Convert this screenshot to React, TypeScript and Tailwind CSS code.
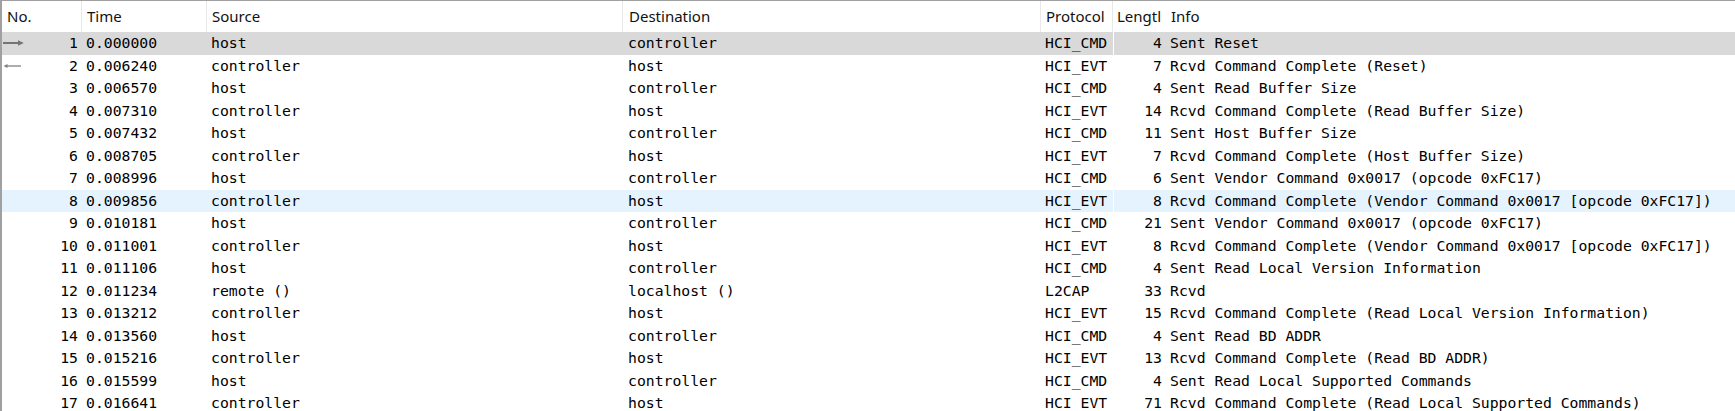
import React from 'react'

type Packet = {
  no: number
  time: string
  src: string
  dst: string
  proto: string
  len: number
  info: string
  dir?: 'out' | 'in'
  state?: 'selected' | 'hover'
}

const packets: Packet[] = [
  { no: 1, time: '0.000000', src: 'host', dst: 'controller', proto: 'HCI_CMD', len: 4, info: 'Sent Reset', dir: 'out', state: 'selected' },
  { no: 2, time: '0.006240', src: 'controller', dst: 'host', proto: 'HCI_EVT', len: 7, info: 'Rcvd Command Complete (Reset)', dir: 'in' },
  { no: 3, time: '0.006570', src: 'host', dst: 'controller', proto: 'HCI_CMD', len: 4, info: 'Sent Read Buffer Size' },
  { no: 4, time: '0.007310', src: 'controller', dst: 'host', proto: 'HCI_EVT', len: 14, info: 'Rcvd Command Complete (Read Buffer Size)' },
  { no: 5, time: '0.007432', src: 'host', dst: 'controller', proto: 'HCI_CMD', len: 11, info: 'Sent Host Buffer Size' },
  { no: 6, time: '0.008705', src: 'controller', dst: 'host', proto: 'HCI_EVT', len: 7, info: 'Rcvd Command Complete (Host Buffer Size)' },
  { no: 7, time: '0.008996', src: 'host', dst: 'controller', proto: 'HCI_CMD', len: 6, info: 'Sent Vendor Command 0x0017 (opcode 0xFC17)' },
  { no: 8, time: '0.009856', src: 'controller', dst: 'host', proto: 'HCI_EVT', len: 8, info: 'Rcvd Command Complete (Vendor Command 0x0017 [opcode 0xFC17])', state: 'hover' },
  { no: 9, time: '0.010181', src: 'host', dst: 'controller', proto: 'HCI_CMD', len: 21, info: 'Sent Vendor Command 0x0017 (opcode 0xFC17)' },
  { no: 10, time: '0.011001', src: 'controller', dst: 'host', proto: 'HCI_EVT', len: 8, info: 'Rcvd Command Complete (Vendor Command 0x0017 [opcode 0xFC17])' },
  { no: 11, time: '0.011106', src: 'host', dst: 'controller', proto: 'HCI_CMD', len: 4, info: 'Sent Read Local Version Information' },
  { no: 12, time: '0.011234', src: 'remote ()', dst: 'localhost ()', proto: 'L2CAP', len: 33, info: 'Rcvd' },
  { no: 13, time: '0.013212', src: 'controller', dst: 'host', proto: 'HCI_EVT', len: 15, info: 'Rcvd Command Complete (Read Local Version Information)' },
  { no: 14, time: '0.013560', src: 'host', dst: 'controller', proto: 'HCI_CMD', len: 4, info: 'Sent Read BD ADDR' },
  { no: 15, time: '0.015216', src: 'controller', dst: 'host', proto: 'HCI_EVT', len: 13, info: 'Rcvd Command Complete (Read BD ADDR)' },
  { no: 16, time: '0.015599', src: 'host', dst: 'controller', proto: 'HCI_CMD', len: 4, info: 'Sent Read Local Supported Commands' },
  { no: 17, time: '0.016641', src: 'controller', dst: 'host', proto: 'HCI_EVT', len: 71, info: 'Rcvd Command Complete (Read Local Supported Commands)' },
]

function DirArrow({ dir }: { dir: 'out' | 'in' }) {
  if (dir === 'out') {
    return (
      <svg width="21" height="8" viewBox="0 0 21 8" className="shrink-0">
        <line x1="0" y1="4" x2="16" y2="4" stroke="#747474" strokeWidth="2" />
        <path d="M15 1.3 L20.8 4 L15 6.7 Z" fill="#747474" />
      </svg>
    )
  }
  return (
    <svg width="19" height="8" viewBox="0 0 19 8" className="shrink-0">
      <line x1="3" y1="4" x2="18" y2="4" stroke="#808080" strokeWidth="1.3" />
      <path d="M0.5 4 L4.5 2 L4.5 6 Z" fill="#808080" />
    </svg>
  )
}

const mono = { fontFamily: '"DejaVu Sans Mono", "Liberation Mono", monospace' }

export default function App() {
  return (
    <div
      className="w-[1735px] h-[411px] overflow-hidden bg-white border-t border-l-2 border-[#a0a0a0] text-black"
      style={{ fontFamily: '"Noto Sans", "Open Sans", sans-serif' }}
    >
      {/* column headers */}
      <div className="flex h-[31px] items-center text-[15px] text-[#111]">
        <div className="w-[80px] h-full flex items-center pl-[5px] border-r border-[#e8e8e8]">No.</div>
        <div className="w-[125px] h-full flex items-center pl-[5px] border-r border-[#e8e8e8]">Time</div>
        <div className="w-[416px] h-full flex items-center pl-[5px] border-r border-[#e8e8e8]">Source</div>
        <div className="w-[418px] h-full flex items-center pl-[6px] border-r border-[#e8e8e8]">Destination</div>
        <div className="w-[72px] h-full flex items-center pl-[5px] border-r border-[#e8e8e8]">Protocol</div>
        <div className="w-[53px] h-full flex items-center pl-[4px] overflow-hidden whitespace-nowrap">Lengtl</div>
        <div className="flex-1 h-full flex items-center pl-[5px]">Info</div>
      </div>

      {/* packet rows */}
      <div className="text-[14.75px]" style={mono}>
        {packets.map((p) => {
          const bg =
            p.state === 'selected' ? 'bg-[#d9d9d9]' : p.state === 'hover' ? 'bg-[#e5f3ff]' : 'bg-white'
          return (
            <div key={p.no} className={`flex h-[22.5px] items-center whitespace-pre ${bg}`}>
              <div className="w-[80px] flex items-center justify-between pl-[1px] pr-[4px]">
                {p.dir ? <DirArrow dir={p.dir} /> : <span />}
                <span>{p.no}</span>
              </div>
              <div className="w-[125px] pl-[4px]">{p.time}</div>
              <div className="w-[416px] pl-[4px]">{p.src}</div>
              <div className="w-[418px] pl-[5px]">{p.dst}</div>
              <div className="w-[72px] pl-[4px]">{p.proto}</div>
              <div
                className={`w-[53px] h-full flex items-center justify-end pr-[4px] ${
                  p.state ? 'border-l border-white' : ''
                }`}
              >
                {p.len}
              </div>
              <div className="flex-1 pl-[4px]">{p.info}</div>
            </div>
          )
        })}
      </div>
    </div>
  )
}
